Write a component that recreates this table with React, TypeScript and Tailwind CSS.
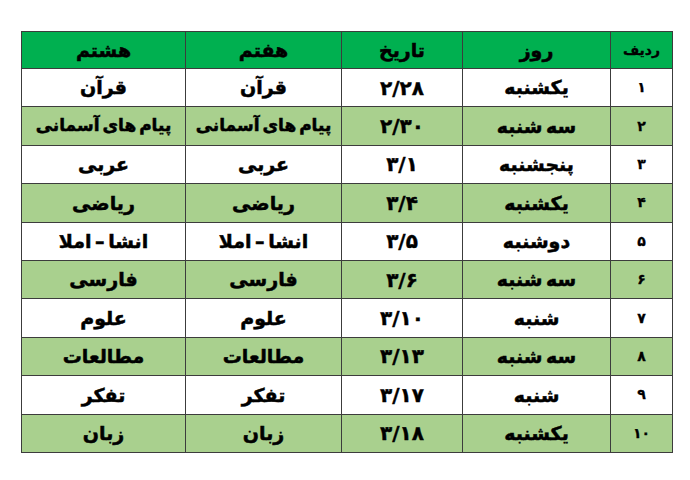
import React from "react";

const rows = [
  { n: "۱", day: "یکشنبه", date: "۲/۲۸", g7: "قرآن", g8: "قرآن" },
  { n: "۲", day: "سه شنبه", date: "۲/۳۰", g7: "پیام های آسمانی", g8: "پیام های آسمانی" },
  { n: "۳", day: "پنجشنبه", date: "۳/۱", g7: "عربی", g8: "عربی" },
  { n: "۴", day: "یکشنبه", date: "۳/۴", g7: "ریاضی", g8: "ریاضی" },
  { n: "۵", day: "دوشنبه", date: "۳/۵", g7: "انشا – املا", g8: "انشا – املا" },
  { n: "۶", day: "سه شنبه", date: "۳/۶", g7: "فارسی", g8: "فارسی" },
  { n: "۷", day: "شنبه", date: "۳/۱۰", g7: "علوم", g8: "علوم" },
  { n: "۸", day: "سه شنبه", date: "۳/۱۳", g7: "مطالعات", g8: "مطالعات" },
  { n: "۹", day: "شنبه", date: "۳/۱۷", g7: "تفکر", g8: "تفکر" },
  { n: "۱۰", day: "یکشنبه", date: "۳/۱۸", g7: "زبان", g8: "زبان" },
];

const cell = "border border-[#3c3c3c] text-center align-middle p-0 whitespace-nowrap";
const stroke = "[word-spacing:-3px] [-webkit-text-stroke:0.5px_black]";

// the long subject name gets a smaller size so it fits its cell
const size = (t: string) => (t.length > 12 ? "text-[17px]" : "text-[19px]");

export default function App() {
  return (
    <div className="w-[690px] h-[480px] bg-white pt-[31px] pl-[21px] font-['DejaVu_Sans',sans-serif] text-black">
      <table dir="rtl" className="border-collapse w-[651px] table-fixed">
        <colgroup>
          <col className="w-[62px]" />
          <col className="w-[148px]" />
          <col className="w-[121px]" />
          <col className="w-[156px]" />
          <col className="w-[164px]" />
        </colgroup>
        <thead>
          <tr className="h-[37px] bg-[#00b050] font-bold">
            <th className={`${cell} text-[14px] [-webkit-text-stroke:0.3px_black]`}>ردیف</th>
            <th className={`${cell} text-[19px] ${stroke}`}>روز</th>
            <th className={`${cell} text-[19px] ${stroke}`}>تاریخ</th>
            <th className={`${cell} text-[19px] ${stroke}`}>هفتم</th>
            <th className={`${cell} text-[19px] ${stroke}`}>هشتم</th>
          </tr>
        </thead>
        <tbody>
          {rows.map((r, i) => (
            <tr
              key={r.n}
              className={`h-[38.4px] font-bold ${i % 2 === 1 ? "bg-[#a9d08e]" : "bg-white"}`}
            >
              <td className={`${cell} text-[14px] [-webkit-text-stroke:0.3px_black]`}>{r.n}</td>
              <td className={`${cell} text-[19px] ${stroke}`}>{r.day}</td>
              <td className={`${cell} text-[20px] [-webkit-text-stroke:0.4px_black]`}>{r.date}</td>
              <td className={`${cell} ${size(r.g7)} ${stroke}`}>{r.g7}</td>
              <td className={`${cell} ${size(r.g8)} ${stroke}`}>{r.g8}</td>
            </tr>
          ))}
        </tbody>
      </table>
    </div>
  );
}
